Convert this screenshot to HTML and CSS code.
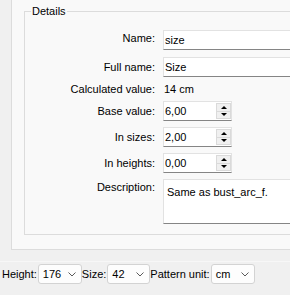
FILE: index.html
```html
<!DOCTYPE html>
<html lang="en">
<head>
    <meta charset="UTF-8">
    <meta name="viewport" content="width=device-width, initial-scale=1.0">
    <title>Details</title>
    <link rel="stylesheet" href="styles.css">
</head>
<body>
    <div class="window">
        <div class="panel">
            <fieldset class="details">
                <legend>Details</legend>
                <div class="form-grid">
                    <label for="name" class="first">Name:</label>
                    <input type="text" id="name" class="first" value="size">

                    <label for="full-name">Full name:</label>
                    <input type="text" id="full-name" value="Size">

                    <span class="label">Calculated value:</span>
                    <span class="value">14 cm</span>

                    <label for="base">Base value:</label>
                    <div class="spinbox">
                        <input type="text" id="base" value="6,00">
                        <span class="spin"><span class="up"></span><span class="down"></span></span>
                    </div>

                    <label for="in-sizes">In sizes:</label>
                    <div class="spinbox">
                        <input type="text" id="in-sizes" value="2,00">
                        <span class="spin"><span class="up"></span><span class="down"></span></span>
                    </div>

                    <label for="in-heights">In heights:</label>
                    <div class="spinbox">
                        <input type="text" id="in-heights" value="0,00">
                        <span class="spin"><span class="up"></span><span class="down"></span></span>
                    </div>

                    <label for="description" class="top">Description:</label>
                    <textarea id="description">Same as bust_arc_f.</textarea>
                </div>
            </fieldset>
        </div>

        <div class="statusbar">
            <span>Height:</span>
            <div class="combo"><span>176</span><svg width="8" height="5" viewBox="0 0 8 5"><path d="M0.5 0.5 L4 4 L7.5 0.5" fill="none" stroke="#5a5a5a" stroke-width="1"/></svg></div>
            <span>Size:</span>
            <div class="combo narrow"><span>42</span><svg width="8" height="5" viewBox="0 0 8 5"><path d="M0.5 0.5 L4 4 L7.5 0.5" fill="none" stroke="#5a5a5a" stroke-width="1"/></svg></div>
            <span>Pattern unit:</span>
            <div class="combo"><span>cm</span><svg width="8" height="5" viewBox="0 0 8 5"><path d="M0.5 0.5 L4 4 L7.5 0.5" fill="none" stroke="#5a5a5a" stroke-width="1"/></svg></div>
        </div>
    </div>
</body>
</html>
```

FILE: styles.css
```css
body {
    margin: 0;
    background-color: #f0f0f0;
    font-family: "Liberation Sans", Arial, sans-serif;
    font-size: 11px;
    color: #000;
    width: 290px;
    height: 295px;
    overflow: hidden;
}

.window {
    width: 330px;
}

.panel {
    height: 250px;
    margin-left: 11px;
    padding: 3px 0 0 12px;
    box-sizing: border-box;
    background-color: #f9f9f9;
    border-left: 1px solid #dcdcdc;
    border-bottom: 1px solid #dcdcdc;
}

/* group box */
.details {
    margin: 0;
    padding: 11px 0 10px 0;
    border: 1px solid #dcdcdc;
    border-right: none;
}

.details legend {
    margin-left: 6px;
    padding: 0 1px;
    line-height: 16px;
}

.form-grid {
    display: grid;
    grid-template-columns: 130px 1fr;
    grid-template-rows: 21px 20px 12px 20px 20px 20px 45px;
    column-gap: 8px;
    row-gap: 6px;
    align-items: center;
}

.form-grid label,
.form-grid .label {
    text-align: right;
    line-height: 16px;
    white-space: nowrap;
}

.form-grid .first {
    align-self: start;
}

.form-grid label.top {
    align-self: start;
}

.value {
    line-height: 16px;
    padding-left: 1px;
}

input[type="text"],
textarea {
    box-sizing: border-box;
    height: 20px;
    margin: 0;
    padding: 0 1px;
    border: 1px solid #e2e2e2;
    border-bottom-color: #858585;
    background-color: #fff;
    font-family: inherit;
    font-size: 11px;
    color: #000;
    outline: none;
}

textarea {
    height: 45px;
    padding: 4px 3px;
    resize: none;
    line-height: 16px;
}

/* spin boxes */
.spinbox {
    display: flex;
    box-sizing: border-box;
    width: 69px;
    height: 20px;
    background-color: #fff;
    border: 1px solid #e2e2e2;
    border-bottom-color: #858585;
}

.spinbox input[type="text"] {
    flex: 1;
    min-width: 0;
    height: 18px;
    border: none;
}

.spin {
    display: flex;
    flex-direction: column;
    width: 15px;
    margin: 1px 0 0 0;
    height: 16px;
}

.spin span {
    position: relative;
    flex: 1;
    box-sizing: border-box;
    background-color: #f0f0f0;
    border: 1px solid #dadada;
}

.spin span.down {
    border-top: none;
}

.spin span:after {
    content: "";
    position: absolute;
    left: 4px;
    top: 2px;
    border-left: 3px solid transparent;
    border-right: 3px solid transparent;
}

.spin .up:after {
    border-bottom: 3px solid #000;
}

.spin .down:after {
    top: 1px;
    border-top: 3px solid #000;
}

/* bottom bar */
.statusbar {
    display: flex;
    align-items: center;
    margin-top: 11px;
    padding: 2px 0 0 2px;
    border-top: 1px solid #f7f7f7;
}

.combo {
    display: flex;
    align-items: center;
    justify-content: space-between;
    box-sizing: border-box;
    width: 44px;
    height: 20px;
    margin-left: 1px;
    padding: 0 5px 0 3px;
    background-color: #fdfdfd;
    border: 1px solid #d3d3d3;
    border-radius: 3px;
}

.combo.narrow {
    width: 43px;
}

.combo span {
    padding-left: 1px;
}
```
